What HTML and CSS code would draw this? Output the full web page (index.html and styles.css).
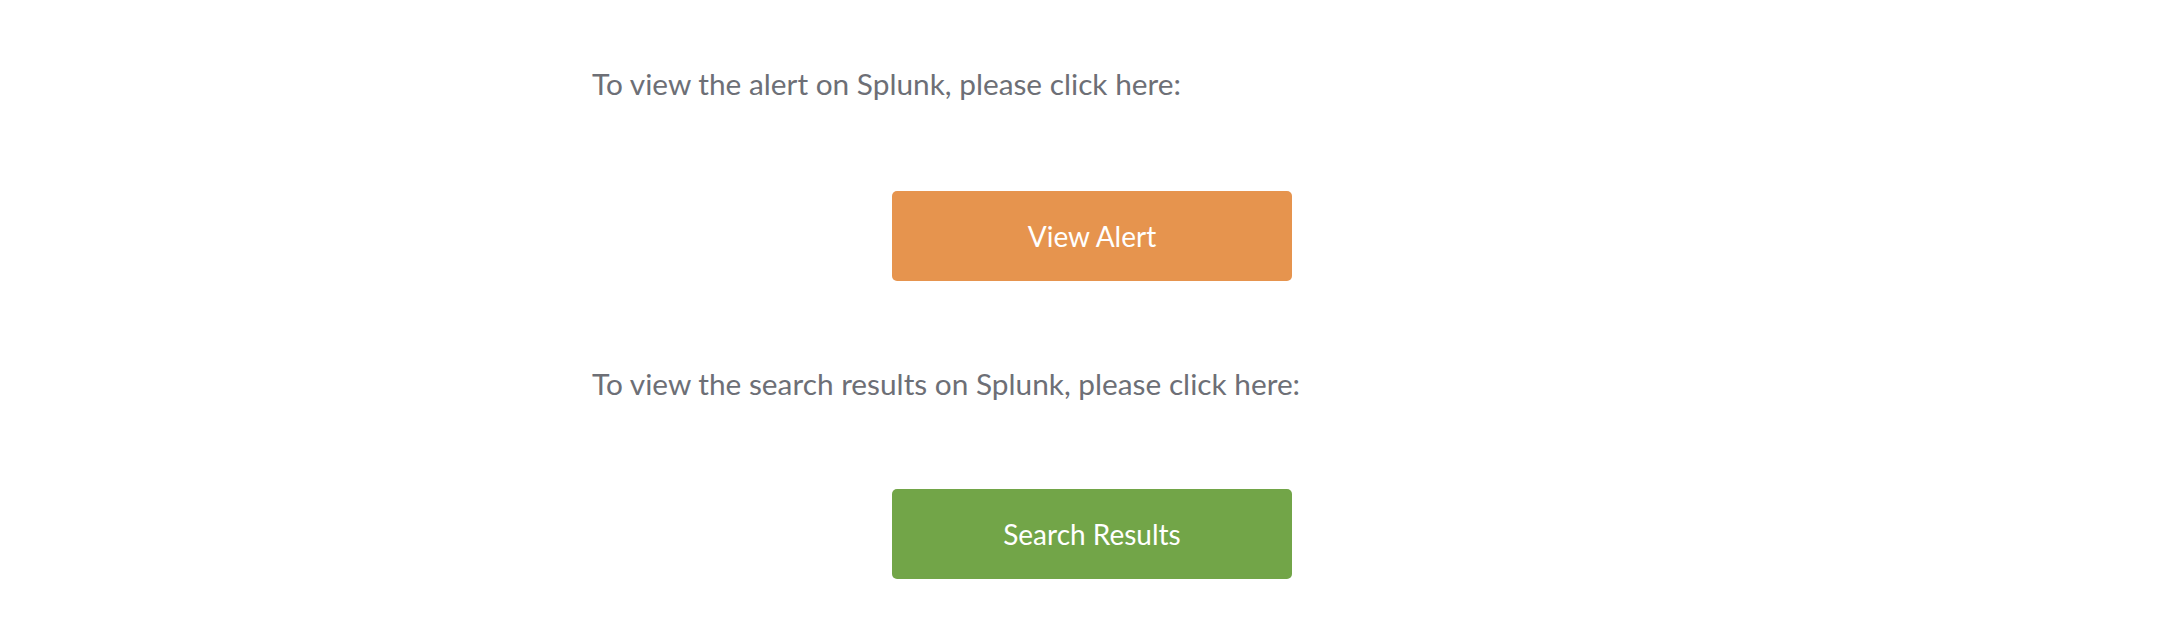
FILE: index.html
```html
<!DOCTYPE html>
<html lang="en">
<head>
<meta charset="utf-8">
<title>Splunk Alert</title>
<link rel="stylesheet" href="styles.css">
</head>
<body>
<main class="content">
  <p class="note">To view the alert on Splunk, please click here:</p>
  <div class="btn-row btn-row-first">
    <a class="btn btn-orange" href="#">View Alert</a>
  </div>
  <p class="note">To view the search results on Splunk, please click here:</p>
  <div class="btn-row btn-row-second">
    <a class="btn btn-green" href="#">Search Results</a>
  </div>
</main>
</body>
</html>
```

FILE: styles.css
```css
html, body {
  margin: 0;
  padding: 0;
  background: #ffffff;
}

body {
  font-family: Lato, "Open Sans", sans-serif;
  color: #6d6f76;
}

.content {
  width: 1000px;
  margin: 0 auto;
  padding-top: 66px;
  display: flex;
  flex-direction: column;
}

.note {
  margin: 0;
  font-size: 29.8px;
  line-height: 36px;
}

.btn-row {
  display: flex;
  justify-content: center;
}

.btn-row-first {
  margin-top: 89px;
  margin-bottom: 85px;
}

.btn-row-second {
  margin-top: 87px;
}

.btn {
  width: 400px;
  height: 90px;
  border-radius: 5px;
  display: flex;
  align-items: center;
  justify-content: center;
  color: #ffffff;
  font-size: 28px;
  text-decoration: none;
}

.btn-orange {
  background: #e6944e;
}

.btn-green {
  background: #72a548;
}
```
